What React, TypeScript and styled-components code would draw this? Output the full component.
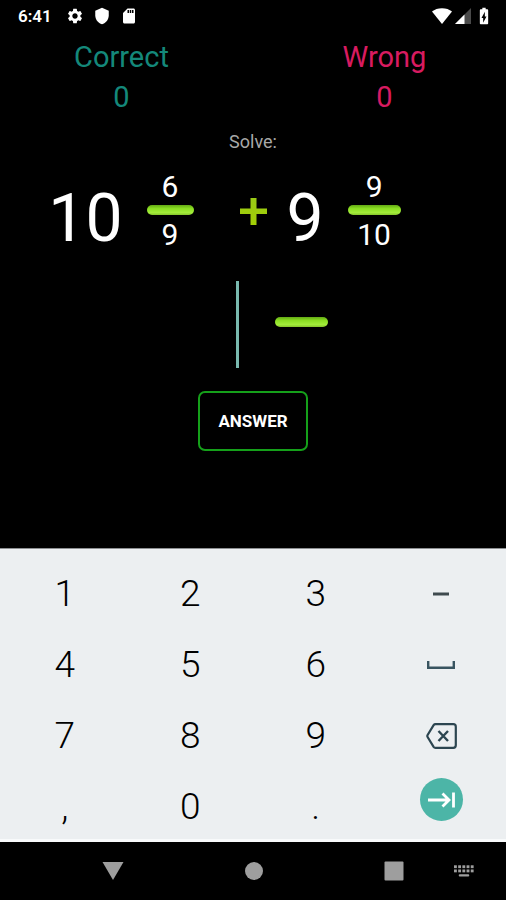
import React from "react";
import styled, { createGlobalStyle } from "styled-components";
import { MdBatteryChargingFull, MdSdCard, MdSettings, MdShield } from "react-icons/md";

const GlobalStyle = createGlobalStyle`
  *, *::before, *::after { box-sizing: border-box; }
  body { margin: 0; background: #000; }
  button, input { font: inherit; }
`;

const Screen = styled.div`
  display: flex;
  flex-direction: column;
  min-height: 100vh;
  background: #000;
  color: #fff;
  font-family: Roboto, "Noto Sans", sans-serif;
`;

const StatusBar = styled.header`
  display: flex;
  align-items: center;
  justify-content: space-between;
  height: 32px;
  padding: 0 12px 0 18px;
`;

const StatusGroup = styled.div<{ $gap: number }>`
  display: flex;
  align-items: center;
  gap: ${(p) => p.$gap}px;

  svg { display: block; }
`;

const Clock = styled.time`
  margin-right: 5px;
  font-size: 17px;
  font-weight: 600;
  line-height: 20px;
`;

const Game = styled.main`
  display: flex;
  flex: 1;
  flex-direction: column;
`;

const Scores = styled.section`
  display: grid;
  grid-template-columns: 1fr 1fr;
  column-gap: 20px;
  padding-top: 5px;
`;

const Score = styled.div<{ $color: string }>`
  display: flex;
  flex-direction: column;
  align-items: center;
  color: ${(p) => p.$color};
  font-size: 29px;
  line-height: 40px;
`;

const Prompt = styled.p`
  margin: 13px 0;
  color: #a8a8a8;
  font-size: 18px;
  line-height: 24px;
  text-align: center;
`;

const Problem = styled.section`
  display: grid;
  grid-template-columns: 1fr auto 1fr;
  align-items: center;
`;

const MixedNumber = styled.div<{ $side: "left" | "right" }>`
  display: flex;
  align-items: center;
  justify-content: ${(p) => (p.$side === "left" ? "flex-end" : "flex-start")};
  gap: 24px;
  padding: ${(p) => (p.$side === "left" ? "0 46px 0 0" : "0 0 0 20px")};
`;

const Whole = styled.span`
  padding-top: 16px;
  font-size: 66px;
  line-height: 72px;
`;

const Fraction = styled.div<{ $width: number }>`
  display: flex;
  flex-direction: column;
  align-items: center;
  width: ${(p) => p.$width}px;
  font-size: 30px;
  line-height: 30px;
`;

const Numerator = styled.span`
  padding: 0 0 3px;
`;

const Denominator = styled.span`
  padding: 5px 0 0;
`;

const Bar = styled.span`
  width: 100%;
  height: 10px;
  border-radius: 5px;
  background: linear-gradient(#63a814, #8ade22 35%, #a2ec3a 75%, #86c62c);
`;

const AnswerForm = styled.form`
  display: flex;
  flex-direction: column;
  align-items: center;
`;

const AnswerFields = styled.div`
  display: grid;
  grid-template-columns: 1fr 1fr;
  align-items: start;
  width: 100%;
  margin-top: 26px;
`;

const Field = styled.input`
  display: block;
  width: 100%;
  padding: 0;
  border: 0;
  outline: 0;
  background: transparent;
  color: #fff;
`;

const WholeField = styled(Field)`
  justify-self: end;
  width: 112px;
  height: 87px;
  margin-right: 14px;
  border-right: 3px solid #79b9af;
  font-size: 66px;
  text-align: right;
`;

const AnswerFraction = styled.div`
  width: 53px;
  margin-left: 22px;
`;

const PartField = styled(Field)`
  height: 36px;
  font-size: 30px;
  text-align: center;
`;

const AnswerBar = styled(Bar)`
  display: block;
`;

const AnswerButton = styled.button`
  height: 60px;
  margin-top: 23px;
  padding: 0 18px;
  border: 2px solid #15a01a;
  border-radius: 7px;
  background: transparent;
  color: #fff;
  font-size: 17px;
  font-weight: 700;
`;

const Keyboard = styled.section`
  display: grid;
  grid-template-columns: repeat(4, 1fr);
  grid-auto-rows: 71px;
  padding: 6px 2px 0;
  border-top: 1px solid #8d9092;
  border-bottom: 3px solid #f8fafb;
  background: #eceff1;
`;

const Key = styled.button`
  display: flex;
  align-items: center;
  justify-content: center;
  padding: 6px 0 0;
  border: 0;
  background: transparent;
  color: #000;
  font-size: 37px;
  font-weight: 300;
  line-height: 44px;

  svg { display: block; }
`;

const NextKey = styled(Key)`
  padding-bottom: 14px;
`;

const NextDisc = styled.span`
  display: flex;
  align-items: center;
  justify-content: center;
  width: 43px;
  height: 43px;
  border-radius: 50%;
  background: #4cb5a7;
`;

const NavBar = styled.nav`
  display: flex;
  align-items: center;
  gap: 50px;
  height: 58px;
  padding: 0 32px 0 102px;
`;

const NavMain = styled.div`
  display: flex;
  flex: 1;
  align-items: center;
  justify-content: space-between;
`;

const NavButton = styled.button`
  padding: 0;
  border: 0;
  background: transparent;
  color: #9e9e9e;

  svg { display: block; }
`;

const WifiIcon = () => (
  <svg width="20" height="16" viewBox="0 0 20 16" fill="#fff" aria-hidden="true">
    <path d="M10 16 0 3.6C2.600 1.500 6 .3 10 .3s7.400 1.200 10 3.300Z" />
  </svg>
);

const SignalIcon = () => (
  <svg width="16" height="16" viewBox="0 0 16 16" aria-hidden="true">
    <path d="M0 16 16 0v16Z" fill="#4a4a4a" />
    <path d="M0 16 9.500 6.500V16Z" fill="#fff" />
  </svg>
);

const PlusIcon = () => (
  <svg width="27" height="27" viewBox="0 0 27 27" role="img" aria-label="plus">
    <defs>
      <linearGradient id="plusFill" x1="0" y1="0" x2="0" y2="1">
        <stop offset="0" stopColor="#9acb16" />
        <stop offset="1" stopColor="#a2cf05" />
      </linearGradient>
    </defs>
    <path d="M10.500 0h6v10.500H27v5.500H16.500v11h-6V16H0v-5.500h10.500Z" fill="url(#plusFill)" />
  </svg>
);

const DashIcon = () => (
  <svg width="16" height="4" viewBox="0 0 16 4" aria-hidden="true">
    <path d="M0 2h16" stroke="#3f4a4e" strokeWidth="3" />
  </svg>
);

const SpaceIcon = () => (
  <svg width="28" height="8" viewBox="0 0 28 8" fill="none" aria-hidden="true">
    <path d="M1.200 0v6.700h25.600V0" stroke="#385460" strokeWidth="2.400" />
  </svg>
);

const BackspaceIcon = () => (
  <svg width="31" height="26" viewBox="0 0 31 26" fill="none" stroke="#2c4550" aria-hidden="true">
    <path d="M9.500 1.200h17.800q2.500 0 2.500 2.500v18.600q0 2.500-2.500 2.500H9.500q-1.200 0-1.900-1L1.600 14q-.6-1 0-2L7.600 2.200q.7-1 1.900-1Z" strokeWidth="2.200" />
    <path d="m12.500 8 9.500 10M22 8l-9.500 10" strokeWidth="2.400" />
  </svg>
);

const NextIcon = () => (
  <svg width="27" height="16" viewBox="0 0 27 16" fill="none" stroke="#fff" strokeWidth="2.800" aria-hidden="true">
    <path d="M0 8h21M14.500 1.500 21 8l-6.500 6.500M25.500.5v15" />
  </svg>
);

const KeyboardIcon = () => (
  <svg width="20" height="12" viewBox="0 0 21 12" fill="currentColor" aria-hidden="true">
    {[0, 4.400, 8.800, 13.200, 17.600].map((x) => (
      <React.Fragment key={x}>
        <rect x={x} y="0" width="3" height="3" />
        <rect x={x} y="4.400" width="3" height="3" />
      </React.Fragment>
    ))}
    <rect x="5" y="9.500" width="11" height="2.200" rx="1" />
  </svg>
);

type FractionProps = { top: number; bottom: number; width: number };

const FractionView = ({ top, bottom, width }: FractionProps) => (
  <Fraction $width={width}>
    <Numerator>{top}</Numerator>
    <Bar />
    <Denominator>{bottom}</Denominator>
  </Fraction>
);

type KeyDef = { id: string; face: React.ReactNode };

const KEYS: KeyDef[] = [
  { id: "1", face: "1" },
  { id: "2", face: "2" },
  { id: "3", face: "3" },
  { id: "Minus", face: <DashIcon /> },
  { id: "4", face: "4" },
  { id: "5", face: "5" },
  { id: "6", face: "6" },
  { id: "Space", face: <SpaceIcon /> },
  { id: "7", face: "7" },
  { id: "8", face: "8" },
  { id: "9", face: "9" },
  { id: "Backspace", face: <BackspaceIcon /> },
  { id: "Comma", face: "," },
  { id: "0", face: "0" },
  { id: "Period", face: "." },
];

export default function App() {
  return (
    <Screen>
      <GlobalStyle />
      <StatusBar>
        <StatusGroup $gap={9}>
          <Clock>6:41</Clock>
          <MdSettings size={18} />
          <MdShield size={18} />
          <MdSdCard size={18} />
        </StatusGroup>
        <StatusGroup $gap={3}>
          <WifiIcon />
          <SignalIcon />
          <MdBatteryChargingFull size={20} />
        </StatusGroup>
      </StatusBar>

      <Game>
        <Scores>
          <Score $color="#14887a">
            <span>Correct</span>
            <span>0</span>
          </Score>
          <Score $color="#d81b60">
            <span>Wrong</span>
            <span>0</span>
          </Score>
        </Scores>

        <Prompt>Solve:</Prompt>

        <Problem>
          <MixedNumber $side="left">
            <Whole>10</Whole>
            <FractionView top={6} bottom={9} width={47} />
          </MixedNumber>
          <PlusIcon />
          <MixedNumber $side="right">
            <Whole>9</Whole>
            <FractionView top={9} bottom={10} width={53} />
          </MixedNumber>
        </Problem>

        <AnswerForm onSubmit={(e) => e.preventDefault()}>
          <AnswerFields>
            <WholeField aria-label="Whole number" inputMode="numeric" />
            <AnswerFraction>
              <PartField aria-label="Numerator" inputMode="numeric" />
              <AnswerBar />
              <PartField aria-label="Denominator" inputMode="numeric" />
            </AnswerFraction>
          </AnswerFields>
          <AnswerButton type="submit">ANSWER</AnswerButton>
        </AnswerForm>
      </Game>

      <Keyboard aria-label="Number pad">
        {KEYS.map((k) => (
          <Key key={k.id} type="button" aria-label={k.id}>
            {k.face}
          </Key>
        ))}
        <NextKey type="button" aria-label="Next">
          <NextDisc>
            <NextIcon />
          </NextDisc>
        </NextKey>
      </Keyboard>

      <NavBar>
        <NavMain>
          <NavButton type="button" aria-label="Back">
            <svg width="22" height="18" viewBox="0 0 22 18" fill="currentColor">
              <path d="M.5 0h21L11 18Z" />
            </svg>
          </NavButton>
          <NavButton type="button" aria-label="Home">
            <svg width="18" height="18" viewBox="0 0 18 18" fill="currentColor">
              <circle cx="9" cy="9" r="9" />
            </svg>
          </NavButton>
          <NavButton type="button" aria-label="Recent apps">
            <svg width="20" height="20" viewBox="0 0 20 20" fill="currentColor">
              <rect x=".5" y=".5" width="19" height="19" rx="1" />
            </svg>
          </NavButton>
        </NavMain>
        <NavButton type="button" aria-label="Switch keyboard">
          <KeyboardIcon />
        </NavButton>
      </NavBar>
    </Screen>
  );
}
